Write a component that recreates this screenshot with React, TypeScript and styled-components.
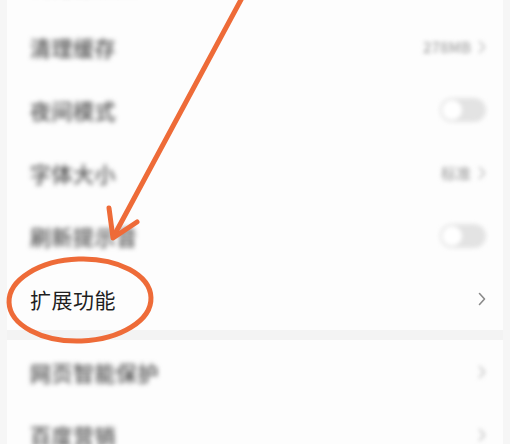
import React from "react";
import styled, { createGlobalStyle } from "styled-components";

const GlobalStyle = createGlobalStyle`
  html, body {
    margin: 0;
    padding: 0;
    background: #f6f6f6;
    font-family: "Noto Sans CJK SC", "Noto Sans", sans-serif;
  }
`;

const Page = styled.div`
  position: relative;
  width: 510px;
  height: 444px;
  overflow: hidden;
  background: #f6f6f6;
`;

const Card = styled.div`
  margin: -48px 7px 0 7px;
  background: #fdfdfd;
`;

const Group = styled.div`
  display: flex;
  flex-direction: column;
`;

const Separator = styled.div`
  height: 10px;
  background: #f3f3f3;
`;

const Row = styled.div`
  display: flex;
  align-items: center;
  justify-content: space-between;
  height: 63px;
  padding: 0 17px 0 23px;
`;

const Label = styled.span<{ $blur?: boolean }>`
  font-size: 21px;
  font-weight: ${({ $blur }) => ($blur ? 500 : 400)};
  color: ${({ $blur }) => ($blur ? "#4e4e4e" : "#1f1f1f")};
  filter: ${({ $blur }) => ($blur ? "blur(2.4px)" : "none")};
  letter-spacing: 0.5px;
`;

const Right = styled.div<{ $blur?: boolean }>`
  display: flex;
  align-items: center;
  gap: 7px;
  filter: ${({ $blur }) => ($blur ? "blur(2px)" : "none")};
`;

const Value = styled.span`
  font-size: 15px;
  font-weight: 500;
  color: #a8a8a8;
`;

const Toggle = styled.div`
  width: 46px;
  height: 24px;
  border-radius: 12px;
  background: #e3e3e3;
  display: flex;
  align-items: center;
  padding: 0 2px;
  box-sizing: border-box;
`;

const Knob = styled.div`
  width: 20px;
  height: 20px;
  border-radius: 50%;
  background: #ffffff;
`;

const Overlay = styled.svg`
  position: absolute;
  left: 0;
  top: 0;
  pointer-events: none;
`;

const Chevron = ({ color }: { color: string }) => (
  <svg width="8" height="14" viewBox="0 0 8 14">
    <path d="M1.5 1.5 L6.5 7 L1.5 12.5" fill="none" stroke={color} strokeWidth="1.6" strokeLinecap="round" strokeLinejoin="round" />
  </svg>
);

type Item = { label: string; kind: "chevron" | "toggle"; value?: string; blur: boolean };

const top: Item[] = [
  { label: "浏览器设置", kind: "chevron", blur: true },
  { label: "清理缓存", kind: "chevron", value: "278MB", blur: true },
  { label: "夜间模式", kind: "toggle", blur: true },
  { label: "字体大小", kind: "chevron", value: "标准", blur: true },
  { label: "刷新提示音", kind: "toggle", blur: true },
  { label: "扩展功能", kind: "chevron", blur: false },
];

const bottom: Item[] = [
  { label: "网页智能保护", kind: "chevron", blur: true },
  { label: "百度营销", kind: "chevron", blur: true },
];

const SettingRow = ({ item }: { item: Item }) => (
  <Row>
    <Label $blur={item.blur}>{item.label}</Label>
    <Right $blur={item.blur}>
      {item.kind === "toggle" ? (
        <Toggle>
          <Knob />
        </Toggle>
      ) : (
        <>
          {item.value && <Value>{item.value}</Value>}
          <Chevron color={item.blur ? "#bdbdbd" : "#8a8a8a"} />
        </>
      )}
    </Right>
  </Row>
);

export default function App() {
  return (
    <>
      <GlobalStyle />
      <Page>
        <Card>
          <Group>
            {top.map((it) => (
              <SettingRow key={it.label} item={it} />
            ))}
          </Group>
          <Separator />
          <Group>
            {bottom.map((it) => (
              <SettingRow key={it.label} item={it} />
            ))}
          </Group>
        </Card>
        <Overlay width="510" height="444" viewBox="0 0 510 444">
          <line x1="243" y1="-4" x2="116" y2="232" stroke="#ee6b38" strokeWidth="5" strokeLinecap="round" />
          <path d="M109 208 L113 238 L137 222" fill="none" stroke="#ee6b38" strokeWidth="5" strokeLinecap="round" strokeLinejoin="round" />
          <ellipse cx="80" cy="300" rx="71" ry="41" fill="none" stroke="#ee6b38" strokeWidth="5" transform="rotate(-2 80 300)" />
        </Overlay>
      </Page>
    </>
  );
}
